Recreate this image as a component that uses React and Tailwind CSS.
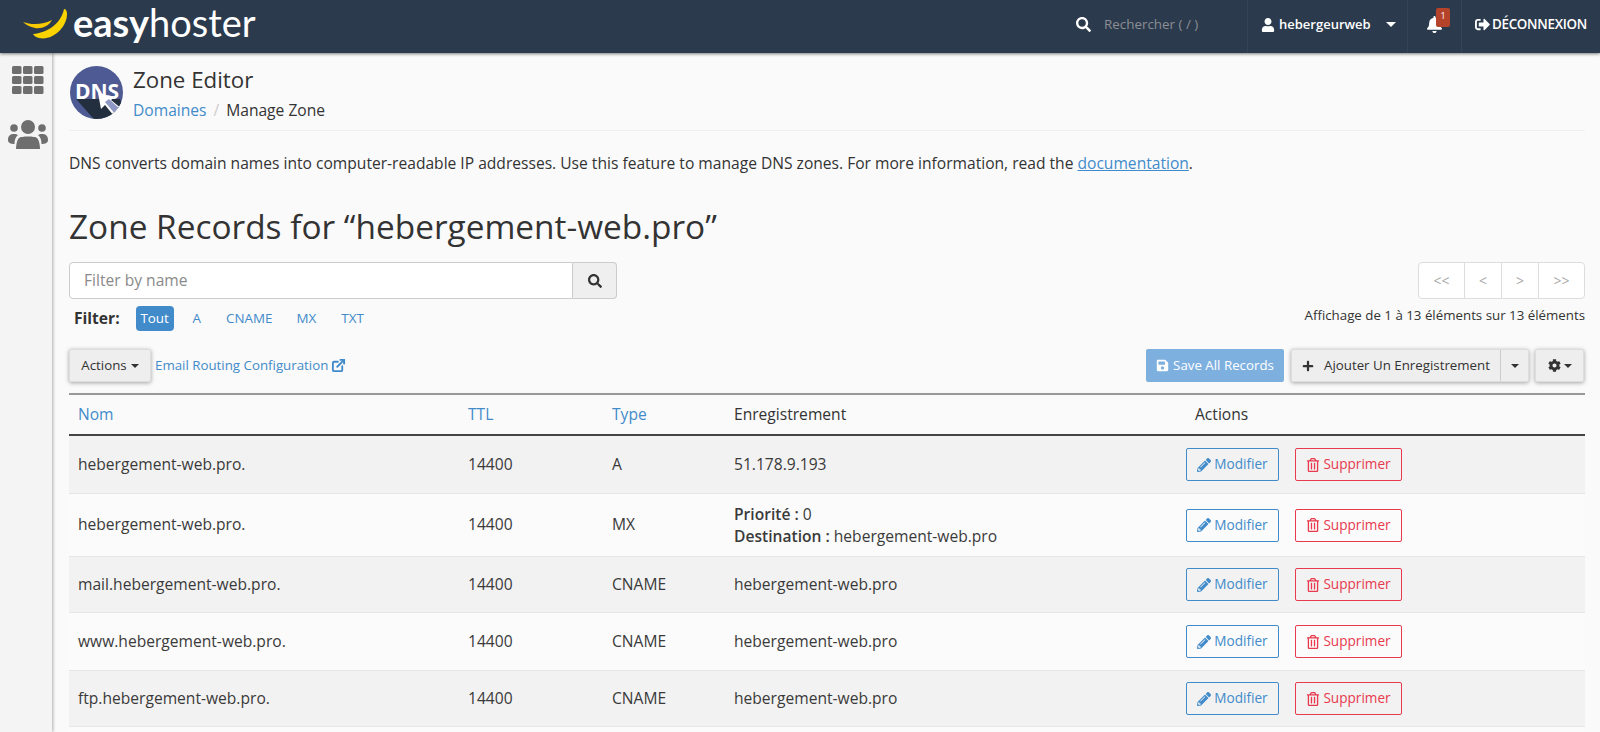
import React from "react";
import { FaSearch, FaUser, FaBell, FaPencilAlt, FaRegTrashAlt, FaSave, FaPlus, FaCog, FaSignOutAlt } from "react-icons/fa";
import { LuExternalLink } from "react-icons/lu";

const Caret = ({ className = "" }) => (
  <span className={"inline-block w-0 h-0 border-x-[4px] border-x-transparent border-t-[4px] border-t-current " + className} />
);

const Banana = () => (
  <svg width="44" height="30" viewBox="0 0 44 30" className="shrink-0">
    <path d="M0 13 C8 16 20 16 29 11 C26 17 19 20 12 19 C7 18 3 16 0 13Z" fill="#f7c900" />
    <path d="M10 25 C24 24 38 15 41 0 C43 0 44 2 44 5 C44 18 30 32 16 29 C13 28 11 27 10 25Z" fill="#fbd400" />
  </svg>
);

const DnsIcon = () => (
  <svg width="53" height="53" viewBox="0 0 53 53" className="shrink-0 ml-[1px]">
    <defs>
      <clipPath id="dnsclip"><circle cx="26.5" cy="26.5" r="26.5" /></clipPath>
    </defs>
    <circle cx="26.5" cy="26.5" r="26.5" fill="#4d5a94" />
    <g clipPath="url(#dnsclip)">
      <path d="M6 33 L50 33 L60 60 L30 60Z" fill="#232f3e" />
      <text x="5" y="33" fill="#fff" fontSize="21" fontWeight="700" fontFamily="'Open Sans', sans-serif">DNS</text>
      <path d="M28 27 L31 43 L35 39 L44 50 L52 43 L41 34 L45 31Z" fill="#fff" />
      <path d="M35 36 L39 33 L51 44 L46 49Z" fill="#8f98c4" />
    </g>
  </svg>
);

const GridIcon = () => (
  <svg width="32" height="28" viewBox="0 0 32 28" fill="#6e6e6e" className="shrink-0">
    {[0, 11, 22].map((x) => [0, 10, 20].map((y) => <rect key={x + "-" + y} x={x} y={y} width="9.5" height="8" rx="1.5" />))}
  </svg>
);

const UsersIcon = () => (
  <svg width="40" height="29" viewBox="0 0 40 29" fill="#6e6e6e" className="shrink-0">
    <circle cx="20" cy="7" r="7" />
    <circle cx="6" cy="8" r="3.8" />
    <circle cx="34" cy="8" r="3.8" />
    <path d="M8 29 C8 29 8 21 11 18 C13 16 27 16 29 18 C32 21 32 29 32 29 Z" />
    <path d="M0 20 C0 15 3 14 6 14 C8 14 9 14.5 10 15 C7.5 17 6.5 20 6.5 24 C3 24 0 23 0 20Z" />
    <path d="M40 20 C40 15 37 14 34 14 C32 14 31 14.5 30 15 C32.5 17 33.5 20 33.5 24 C37 24 40 23 40 20Z" />
  </svg>
);

const rows = [
  { name: "hebergement-web.pro.", type: "A", rec: "51.178.9.193", h: "h-[58px]", bg: "bg-[#f2f2f2]" },
  { name: "hebergement-web.pro.", type: "MX", mx: true, h: "h-[63px]", bg: "bg-[#fbfbfb]" },
  { name: "mail.hebergement-web.pro.", type: "CNAME", rec: "hebergement-web.pro", h: "h-[56px]", bg: "bg-[#f2f2f2]" },
  { name: "www.hebergement-web.pro.", type: "CNAME", rec: "hebergement-web.pro", h: "h-[58px]", bg: "bg-[#fbfbfb]" },
  { name: "ftp.hebergement-web.pro.", type: "CNAME", rec: "hebergement-web.pro", h: "h-[56px]", bg: "bg-[#f2f2f2]" },
  { name: "", type: "", rec: "", h: "h-[40px]", bg: "bg-[#fbfbfb]", empty: true },
];

function Row({ r }) {
  return (
    <div className={`grid grid-cols-[390px_144px_122px_452px_1fr] items-center border-b border-[#e6e6e6] pl-[9px] text-[15.6px] text-[#3a3a3a] ${r.h} ${r.bg}`}>
      <div>{r.name}</div>
      <div>{r.empty ? "" : "14400"}</div>
      <div>{r.type}</div>
      <div>
        {r.mx ? (
          <div className="leading-[22px] -mt-[1px]">
            <div><b className="font-semibold">Priorité :</b> 0</div>
            <div><b className="font-semibold">Destination :</b> hebergement-web.pro</div>
          </div>
        ) : r.rec}
      </div>
      {!r.empty && (
        <div className="flex gap-4 text-[13.6px]">
          <button className="w-[93px] h-[33px] flex items-center justify-center gap-[3px] border border-[#428bca] rounded-[2px] text-[#428bca]">
            <FaPencilAlt className="text-[14px]" /> Modifier
          </button>
          <button className="w-[107px] h-[33px] flex items-center justify-center gap-[3px] border border-[#e8394d] rounded-[2px] text-[#e8394d]">
            <FaRegTrashAlt className="text-[14px]" /> Supprimer
          </button>
        </div>
      )}
    </div>
  );
}

export default function App() {
  return (
    <div className="h-[732px] overflow-hidden flex flex-col bg-[#fafafa] font-['Open_Sans',sans-serif] text-[#333]">
      <header className="relative z-20 h-[53px] shrink-0 bg-[#2b3a4d] flex items-center shadow-[0_1px_3px_rgba(0,0,0,0.5)] text-white">
        <div className="flex items-center pl-[23px] gap-[6px] -mt-[5px]">
          <Banana />
          <div className="text-[38px] leading-none font-['Lato',sans-serif] -mt-[4px]"><span className="font-bold">easy</span><span className="font-normal">hoster</span></div>
        </div>
        <div className="ml-auto flex h-full items-center">
          <div className="flex items-center w-[171px] pb-[4px]">
            <FaSearch className="text-[15px] mr-[13px]" />
            <span className="text-[13.4px] text-[#8c8f94]">Rechercher ( / )</span>
          </div>
          <div className="h-full w-[160px] border-l border-[#344456] flex items-center pl-[13px] pb-[4px] text-[13px] font-semibold">
            <FaUser className="text-[14px] mr-[4px]" /> hebergeurweb <Caret className="ml-[15px] border-x-[5px] border-t-[5px]" />
          </div>
          <div className="relative h-full w-[54px] border-l border-[#344456] flex items-center pl-[18px] pb-[4px]">
            <FaBell className="text-[17px]" />
            <span className="absolute left-[28px] top-[8px] w-[14px] h-[19px] bg-[#b5432a] rounded-[2px] text-[9px] text-center leading-[16px]">1</span>
          </div>
          <div className="h-full w-[139px] border-l border-[#344456] flex items-center pl-[13px] pb-[5px] text-[13.4px] font-semibold tracking-[-0.3px]">
            <FaSignOutAlt className="text-[15px] mr-[2px]" /> DÉCONNEXION
          </div>
        </div>
      </header>
      <div className="flex flex-1 min-h-0">
        <aside className="relative z-10 w-[52px] shrink-0 bg-[#f4f4f4] shadow-[1px_0_3px_rgba(0,0,0,0.3)] flex flex-col items-center pt-[13px] pl-[3px] gap-[26px]">
          <GridIcon />
          <UsersIcon />
        </aside>
        <main className="flex-1 min-w-0 pl-[17px] pr-[15px]">
          <div className="flex items-center gap-[10px] h-[78px] border-b border-[#eee] pt-[2px] mb-[22px]">
            <DnsIcon />
            <div>
              <div className="text-[22.3px] leading-[28px] text-[#333]">Zone Editor</div>
              <div className="text-[15.6px] mt-[6px] leading-[20px]">
                <span className="text-[#428bca]">Domaines</span>
                <span className="text-[#ccc] mx-[7px]">/</span>
                <span>Manage Zone</span>
              </div>
            </div>
          </div>
          <p className="text-[15.6px] leading-[20px]">
            DNS converts domain names into computer-readable IP addresses. Use this feature to manage DNS zones. For more information, read the <span className="text-[#428bca] underline">documentation</span>.
          </p>
          <h1 className="text-[33.4px] leading-[40px] mt-[33px] text-[#333]">Zone Records for “hebergement-web.pro”</h1>
          <div className="flex justify-between mt-[16px]">
            <div>
              <div className="flex w-[548px] h-[37px]">
                <div className="flex-1 bg-white border border-[#ccc] rounded-l-[4px] pl-[14px] flex items-center text-[15.6px] text-[#8a8a8a]">Filter by name</div>
                <div className="w-[44px] bg-[#efefef] border border-l-0 border-[#ccc] rounded-r-[4px] flex items-center justify-center"><FaSearch className="text-[14px] text-[#333]" /></div>
              </div>
              <div className="flex items-center h-[25px] mt-[7px] text-[13.4px] text-[#428bca]">
                <b className="text-[#333] text-[15.6px] font-bold ml-[5px] mr-[16px]">Filter:</b>
                <span className="w-[38px] h-[25px] rounded-[4px] bg-[#428bca] text-white flex items-center justify-center mr-[19px]">Tout</span>
                <span className="mr-[25px]">A</span>
                <span className="mr-[24px]">CNAME</span>
                <span className="mr-[25px]">MX</span>
                <span>TXT</span>
              </div>
            </div>
            <div className="flex flex-col items-end">
              <div className="flex h-[37px] border border-[#ddd] rounded-[4px] bg-white text-[14px] text-[#aaa]">
                <span className="w-[46px] flex items-center justify-center border-r border-[#ddd]">&lt;&lt;</span>
                <span className="w-[37px] flex items-center justify-center border-r border-[#ddd]">&lt;</span>
                <span className="w-[37px] flex items-center justify-center border-r border-[#ddd]">&gt;</span>
                <span className="w-[45px] flex items-center justify-center">&gt;&gt;</span>
              </div>
              <div className="text-[13.3px] mt-[6px] leading-[20px]">Affichage de 1 à 13 éléments sur 13 éléments</div>
            </div>
          </div>
          <div className="flex items-center justify-between mt-[18px] text-[13.3px]">
            <div className="flex items-center gap-[4px]">
              <button className="w-[82px] h-[33px] bg-[#eee] border border-[#ddd] rounded-[2px] shadow-[0_1px_4px_rgba(0,0,0,0.35)] flex items-center justify-center gap-[4px]">Actions <Caret /></button>
              <span className="text-[#428bca] flex items-center gap-[3px]">Email Routing Configuration <LuExternalLink className="text-[15px]" strokeWidth={3} /></span>
            </div>
            <div className="flex items-center">
              <button className="w-[138px] h-[33px] bg-[#7eb0df] rounded-[2px] text-white flex items-center justify-center gap-[4px]"><FaSave className="text-[13px]" /> Save All Records</button>
              <div className="ml-[7px] h-[33px] flex bg-[#eee] border border-[#ddd] rounded-[2px] shadow-[0_1px_4px_rgba(0,0,0,0.35)]">
                <span className="w-[209px] flex items-center justify-center gap-[10px] border-r border-[#ccc]"><FaPlus className="text-[12px]" /> Ajouter Un Enregistrement</span>
                <span className="w-[27px] flex items-center justify-center"><Caret /></span>
              </div>
              <div className="ml-[6px] mr-[1px] w-[49px] h-[33px] flex items-center justify-center gap-[3px] bg-[#eee] border border-[#ddd] rounded-[2px] shadow-[0_1px_4px_rgba(0,0,0,0.35)]"><FaCog className="text-[13px]" /><Caret /></div>
            </div>
          </div>
          <div className="mt-[11px] border-t-2 border-[#999]">
            <div className="grid grid-cols-[390px_144px_122px_452px_1fr] items-center h-[41px] pl-[9px] border-b-2 border-[#444] text-[15.6px]">
              <span className="text-[#428bca]">Nom</span>
              <span className="text-[#428bca]">TTL</span>
              <span className="text-[#428bca]">Type</span>
              <span>Enregistrement</span>
              <span className="pl-[9px]">Actions</span>
            </div>
            {rows.map((r, i) => <Row key={i} r={r} />)}
          </div>
        </main>
      </div>
    </div>
  );
}
